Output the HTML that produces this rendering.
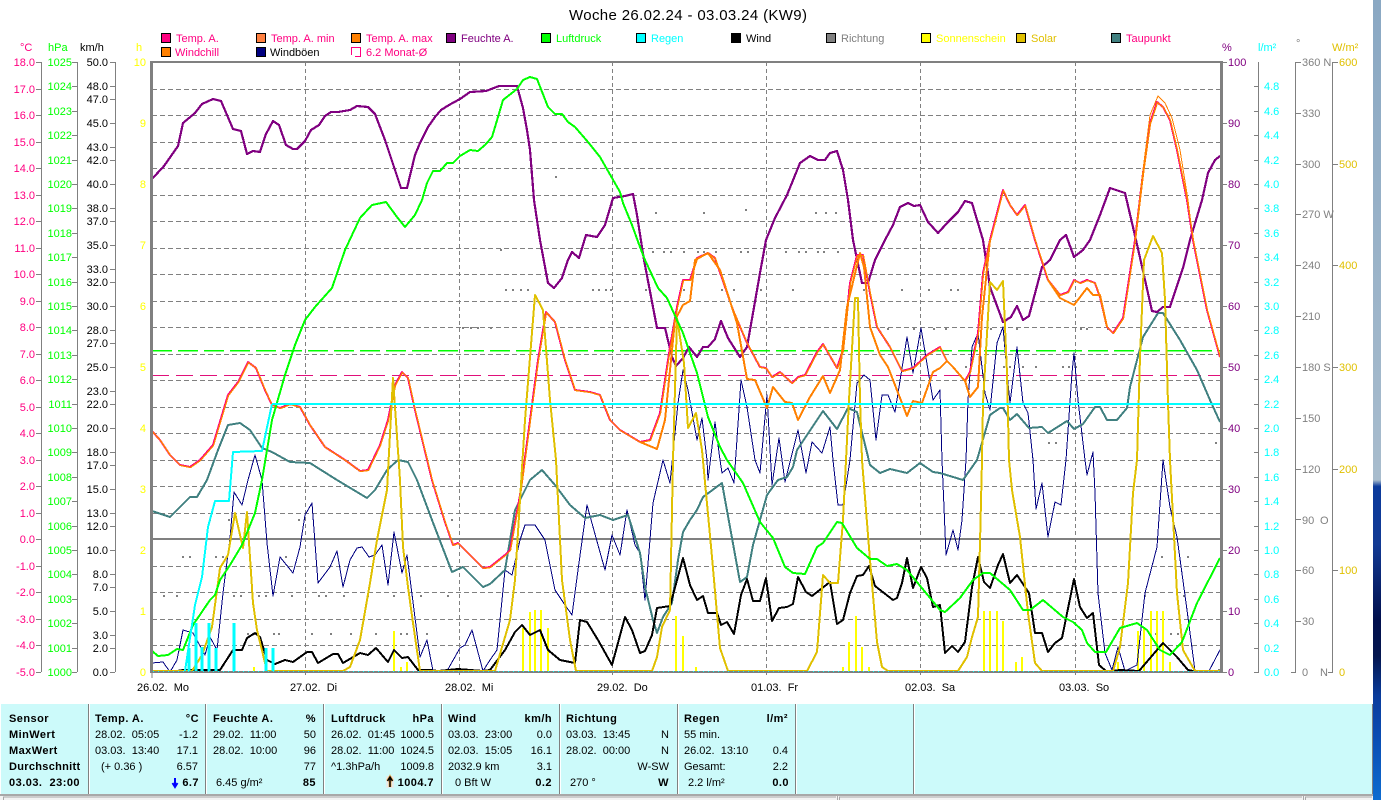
<!DOCTYPE html>
<html lang="de"><head><meta charset="utf-8"><title>Woche 26.02.24 - 03.03.24 (KW9)</title>
<style>
html,body{margin:0;padding:0;background:#fff;width:1381px;height:800px;overflow:hidden}
svg{position:absolute;left:0;top:0;display:block}
text{font-family:"Liberation Sans",sans-serif;font-size:11px;white-space:pre}
.l{shape-rendering:crispEdges;fill:none;stroke-linejoin:round}
.b{font-weight:bold;letter-spacing:.45px;fill:#000}
</style></head><body>
<svg width="1381" height="800" viewBox="0 0 1381 800" xmlns="http://www.w3.org/2000/svg">
<defs><linearGradient id="dsk" x1="0" y1="0" x2="0" y2="1">
<stop offset="0" stop-color="#8aa8c3"/><stop offset=".6" stop-color="#a8bccd"/><stop offset=".608" stop-color="#0b3a9c"/><stop offset=".68" stop-color="#123a94"/><stop offset=".775" stop-color="#01104e"/><stop offset=".82" stop-color="#04164f"/><stop offset=".87" stop-color="#0a3c9c"/><stop offset=".92" stop-color="#0a4cb2"/><stop offset="1" stop-color="#0d6cd0"/></linearGradient></defs>
<rect width="1381" height="800" fill="#fff"/>
<rect x="1373" y="0" width="8" height="800" fill="url(#dsk)"/>

<!-- title -->
<text x="569" y="20" textLength="238" style="font-size:15px" fill="#000">Woche 26.02.24 - 03.03.24 (KW9)</text>

<!-- legend -->
<g stroke="#000" stroke-width="1" shape-rendering="crispEdges">
<rect x="161.5" y="33.5" width="9" height="9" fill="#ff0080"/><rect x="256.5" y="33.5" width="9" height="9" fill="#ff8040"/><rect x="351.5" y="33.5" width="9" height="9" fill="#ff8000"/><rect x="446.5" y="33.5" width="9" height="9" fill="#800080"/><rect x="541.5" y="33.5" width="9" height="9" fill="#00ff00"/><rect x="636.5" y="33.5" width="9" height="9" fill="#00ffff"/><rect x="731.5" y="33.5" width="9" height="9" fill="#000"/><rect x="826.5" y="33.5" width="9" height="9" fill="#808080"/><rect x="921.5" y="33.5" width="9" height="9" fill="#ffff00"/><rect x="1016.5" y="33.5" width="9" height="9" fill="#e0c000"/><rect x="1111.5" y="33.5" width="9" height="9" fill="#408080"/>
<rect x="161.5" y="47.5" width="9" height="9" fill="#ff8000"/><rect x="256.5" y="47.5" width="9" height="9" fill="#000080"/>
</g>
<path d="M351.5 55V47.5H360.5V56.5H355" fill="none" stroke="#ff0080" shape-rendering="crispEdges"/>
<g>
<text x="176" y="42" fill="#ff0080">Temp. A.</text><text x="271" y="42" fill="#ff0080">Temp. A. min</text><text x="366" y="42" fill="#ff0080">Temp. A. max</text><text x="461" y="42" fill="#800080">Feuchte A.</text><text x="556" y="42" fill="#00ff00">Luftdruck</text><text x="651" y="42" fill="#00ffff">Regen</text><text x="746" y="42" fill="#000">Wind</text><text x="841" y="42" fill="#808080">Richtung</text><text x="936" y="42" fill="#ffff00">Sonnenschein</text><text x="1031" y="42" fill="#e0c000">Solar</text><text x="1126" y="42" fill="#ff0080">Taupunkt</text>
<text x="175" y="56" fill="#ff0080">Windchill</text><text x="270" y="56" fill="#000">Windböen</text><text x="366" y="56" fill="#ff0080">6.2 Monat-Ø</text>
</g>

<!-- unit labels -->
<text x="20" y="51" fill="#ff0080">°C</text><text x="48" y="51" fill="#00ff00">hPa</text><text x="80" y="51" fill="#000">km/h</text><text x="136" y="51" fill="#ffff00">h</text>
<text x="1222" y="51" fill="#800080">%</text><text x="1258" y="51" fill="#00ffff">l/m²</text><text x="1296" y="47" fill="#808080">°</text><text x="1332" y="51" fill="#e0c000">W/m²</text>

<!-- temp axis -->
<g fill="#ff0080" text-anchor="end">
<text x="35" y="66">18.0</text><text x="35" y="93">17.0</text><text x="35" y="119">16.0</text><text x="35" y="146">15.0</text><text x="35" y="172">14.0</text><text x="35" y="199">13.0</text><text x="35" y="225">12.0</text><text x="35" y="252">11.0</text><text x="35" y="278">10.0</text><text x="35" y="305">9.0</text><text x="35" y="331">8.0</text><text x="35" y="358">7.0</text><text x="35" y="384">6.0</text><text x="35" y="411">5.0</text><text x="35" y="437">4.0</text><text x="35" y="464">3.0</text><text x="35" y="490">2.0</text><text x="35" y="517">1.0</text><text x="35" y="543">0.0</text><text x="35" y="570">-1.0</text><text x="35" y="596">-2.0</text><text x="35" y="623">-3.0</text><text x="35" y="649">-4.0</text><text x="35" y="676">-5.0</text>
</g>
<!-- pressure axis -->
<g fill="#00ff00" text-anchor="end">
<text x="72" y="66">1025</text><text x="72" y="90">1024</text><text x="72" y="115">1023</text><text x="72" y="139">1022</text><text x="72" y="164">1021</text><text x="72" y="188">1020</text><text x="72" y="212">1019</text><text x="72" y="237">1018</text><text x="72" y="261">1017</text><text x="72" y="286">1016</text><text x="72" y="310">1015</text><text x="72" y="334">1014</text><text x="72" y="359">1013</text><text x="72" y="383">1012</text><text x="72" y="408">1011</text><text x="72" y="432">1010</text><text x="72" y="456">1009</text><text x="72" y="481">1008</text><text x="72" y="505">1007</text><text x="72" y="530">1006</text><text x="72" y="554">1005</text><text x="72" y="578">1004</text><text x="72" y="603">1003</text><text x="72" y="627">1002</text><text x="72" y="652">1001</text><text x="72" y="676">1000</text>
</g>
<!-- km/h axis -->
<g fill="#000" text-anchor="end">
<text x="108" y="66">50.0</text><text x="108" y="90">48.0</text><text x="108" y="103">47.0</text><text x="108" y="127">45.0</text><text x="108" y="151">43.0</text><text x="108" y="164">42.0</text><text x="108" y="188">40.0</text><text x="108" y="212">38.0</text><text x="108" y="225">37.0</text><text x="108" y="249">35.0</text><text x="108" y="273">33.0</text><text x="108" y="286">32.0</text><text x="108" y="310">30.0</text><text x="108" y="334">28.0</text><text x="108" y="347">27.0</text><text x="108" y="371">25.0</text><text x="108" y="395">23.0</text><text x="108" y="408">22.0</text><text x="108" y="432">20.0</text><text x="108" y="456">18.0</text><text x="108" y="469">17.0</text><text x="108" y="493">15.0</text><text x="108" y="517">13.0</text><text x="108" y="530">12.0</text><text x="108" y="554">10.0</text><text x="108" y="578">8.0</text><text x="108" y="591">7.0</text><text x="108" y="615">5.0</text><text x="108" y="639">3.0</text><text x="108" y="652">2.0</text><text x="108" y="676">0.0</text>
</g>
<!-- h axis -->
<g fill="#ffff00" text-anchor="end">
<text x="146" y="66">10</text><text x="146" y="127">9</text><text x="146" y="188">8</text><text x="146" y="249">7</text><text x="146" y="310">6</text><text x="146" y="371">5</text><text x="146" y="432">4</text><text x="146" y="493">3</text><text x="146" y="554">2</text><text x="146" y="615">1</text><text x="146" y="676">0</text>
</g>
<!-- % axis -->
<g fill="#800080">
<text x="1228" y="66">100</text><text x="1228" y="127">90</text><text x="1228" y="188">80</text><text x="1228" y="249">70</text><text x="1228" y="310">60</text><text x="1228" y="371">50</text><text x="1228" y="432">40</text><text x="1228" y="493">30</text><text x="1228" y="554">20</text><text x="1228" y="615">10</text><text x="1228" y="676">0</text>
</g>
<!-- l/m2 axis -->
<g fill="#00ffff">
<text x="1264" y="90">4.8</text><text x="1264" y="115">4.6</text><text x="1264" y="139">4.4</text><text x="1264" y="164">4.2</text><text x="1264" y="188">4.0</text><text x="1264" y="212">3.8</text><text x="1264" y="237">3.6</text><text x="1264" y="261">3.4</text><text x="1264" y="286">3.2</text><text x="1264" y="310">3.0</text><text x="1264" y="334">2.8</text><text x="1264" y="359">2.6</text><text x="1264" y="383">2.4</text><text x="1264" y="408">2.2</text><text x="1264" y="432">2.0</text><text x="1264" y="456">1.8</text><text x="1264" y="481">1.6</text><text x="1264" y="505">1.4</text><text x="1264" y="530">1.2</text><text x="1264" y="554">1.0</text><text x="1264" y="578">0.8</text><text x="1264" y="603">0.6</text><text x="1264" y="627">0.4</text><text x="1264" y="652">0.2</text><text x="1264" y="676">0.0</text>
</g>
<!-- direction axis -->
<g fill="#808080">
<text x="1302" y="66">360 N</text><text x="1302" y="117">330</text><text x="1302" y="168">300</text><text x="1302" y="218">270 W</text><text x="1302" y="269">240</text><text x="1302" y="320">210</text><text x="1302" y="371">180 S</text><text x="1302" y="422">150</text><text x="1302" y="473">120</text><text x="1302" y="524">90</text><text x="1320" y="524">O</text><text x="1302" y="574">60</text><text x="1302" y="625">30</text><text x="1302" y="676">0</text><text x="1320" y="676">N</text>
</g>
<!-- W/m2 axis -->
<g fill="#e0c000">
<text x="1339" y="66">600</text><text x="1339" y="168">500</text><text x="1339" y="269">400</text><text x="1339" y="371">300</text><text x="1339" y="473">200</text><text x="1339" y="574">100</text><text x="1339" y="676">0</text>
</g>

<!-- axis lines & ticks -->
<path shape-rendering="crispEdges" stroke="#808080" stroke-width="1" fill="none" d="M41.5 62V672M77.5 62V672M115.5 62V672M1258.5 62V672M1295.5 62V672M1332.5 62V672
M36 62.5h5M36 89.5h5M36 115.5h5M36 142.5h5M36 168.5h5M36 195.5h5M36 221.5h5M36 248.5h5M36 274.5h5M36 301.5h5M36 327.5h5M36 354.5h5M36 380.5h5M36 407.5h5M36 433.5h5M36 460.5h5M36 486.5h5M36 513.5h5M36 539.5h5M36 566.5h5M36 592.5h5M36 619.5h5M36 645.5h5M36 672.5h5
M72 62.5h5M72 86.5h5M72 111.5h5M72 135.5h5M72 160.5h5M72 184.5h5M72 208.5h5M72 233.5h5M72 257.5h5M72 282.5h5M72 306.5h5M72 330.5h5M72 355.5h5M72 379.5h5M72 404.5h5M72 428.5h5M72 452.5h5M72 477.5h5M72 501.5h5M72 526.5h5M72 550.5h5M72 574.5h5M72 599.5h5M72 623.5h5M72 648.5h5M72 672.5h5
M110 62.5h5M110 86.5h5M110 99.5h5M110 123.5h5M110 147.5h5M110 160.5h5M110 184.5h5M110 208.5h5M110 221.5h5M110 245.5h5M110 269.5h5M110 282.5h5M110 306.5h5M110 330.5h5M110 343.5h5M110 367.5h5M110 391.5h5M110 404.5h5M110 428.5h5M110 452.5h5M110 465.5h5M110 489.5h5M110 513.5h5M110 526.5h5M110 550.5h5M110 574.5h5M110 587.5h5M110 611.5h5M110 635.5h5M110 648.5h5M110 672.5h5
M1222 62.5h5M1222 123.5h5M1222 184.5h5M1222 245.5h5M1222 306.5h5M1222 367.5h5M1222 428.5h5M1222 489.5h5M1222 550.5h5M1222 611.5h5M1222 672.5h5
M1254 86.5h5M1254 111.5h5M1254 135.5h5M1254 160.5h5M1254 184.5h5M1254 208.5h5M1254 233.5h5M1254 257.5h5M1254 282.5h5M1254 306.5h5M1254 330.5h5M1254 355.5h5M1254 379.5h5M1254 404.5h5M1254 428.5h5M1254 452.5h5M1254 477.5h5M1254 501.5h5M1254 526.5h5M1254 550.5h5M1254 574.5h5M1254 599.5h5M1254 623.5h5M1254 648.5h5M1254 672.5h5
M1296 62.5h5M1296 113.5h5M1296 164.5h5M1296 214.5h5M1296 265.5h5M1296 316.5h5M1296 367.5h5M1296 418.5h5M1296 469.5h5M1296 519.5h5M1296 570.5h5M1296 621.5h5M1291 672.5h5
M1333 62.5h5M1333 164.5h5M1333 265.5h5M1333 367.5h5M1333 469.5h5M1333 570.5h5M1328 672.5h5"/>

<!-- grid -->
<path shape-rendering="crispEdges" stroke="#808080" stroke-width="1" stroke-dasharray="5 3" fill="none" d="M152 89.5H1220M152 115.5H1220M152 142.5H1220M152 168.5H1220M152 195.5H1220M152 221.5H1220M152 248.5H1220M152 274.5H1220M152 301.5H1220M152 327.5H1220M152 354.5H1220M152 380.5H1220M152 407.5H1220M152 433.5H1220M152 460.5H1220M152 486.5H1220M152 513.5H1220M152 566.5H1220M152 592.5H1220M152 619.5H1220M152 645.5H1220"/>
<path shape-rendering="crispEdges" stroke="#808080" stroke-width="1" stroke-dasharray="4 3" fill="none" d="M305.5 62V678M459.5 62V678M612.5 62V678M766.5 62V678M920.5 62V678M1075.5 62V678"/>
<path shape-rendering="crispEdges" stroke="#808080" fill="none" d="M152 678V672"/>

<!-- direction dots -->
<path shape-rendering="crispEdges" stroke="#808080" stroke-width="2" fill="none" d="M209 520h2M228 520h2M298 520h2M451 520h2M182 557h2M189 557h2M215 557h2M222 557h2M285 557h2M163 596h2M176 596h2M233 596h2M240 596h2M258 596h2M265 596h2M291 596h2M318 596h2M325 596h2M343 596h2M367 596h2M393 596h2M420 596h2M447 596h2M247 634h2M253 634h2M273 634h2M278 634h2M311 634h2M330 634h2M350 634h2M375 634h2M393 634h2M400 634h2M406 634h2M426 634h2M555 177h2M500 250h2M505 290h2M512 290h2M520 290h2M527 290h2M592 290h2M598 290h2M605 290h2M610 290h2M462 328h2M470 328h2M477 328h2M490 328h2M655 213h2M703 213h2M745 210h2M815 213h2M825 213h2M835 213h2M652 252h2M663 252h2M670 252h2M683 252h2M697 252h2M703 252h2M715 252h2M740 252h2M747 252h2M785 252h2M798 252h2M805 252h2M817 252h2M823 252h2M837 252h2M645 290h2M683 290h2M721 290h2M733 290h2M760 290h2M792 290h2M848 290h2M863 290h2M901 290h2M928 290h2M950 290h2M957 290h2M887 329h2M913 329h2M933 329h2M945 329h2M990 329h2M1016 329h2M1080 329h2M1086 329h2M1107 329h2M965 367h2M978 367h2M1003 367h2M1009 367h2M1022 367h2M1035 367h2M1062 367h2M1068 367h2M1075 367h2M1048 443h2M1055 443h2M1215 443h2M1161 557h2M1187 557h2M1144 596h2M1183 596h2M1155 634h2M1162 634h2M1170 634h2M1177 634h2"/>

<!-- average dashed -->
<path shape-rendering="crispEdges" fill="none" stroke="#00ff00" stroke-width="1.5" stroke-dasharray="20 6" d="M152 350.5H1220"/>
<path shape-rendering="crispEdges" fill="none" stroke="#e0107a" stroke-width="1" stroke-dasharray="17 7" d="M152 375.5H1220"/>

<!-- zero line -->
<rect x="152" y="538" width="1069" height="2" fill="#808080"/>

<!-- sunshine bars -->
<path shape-rendering="crispEdges" fill="none" stroke="#ffff00" stroke-width="2" d="M254 672V667M394 672V631M401 672V667M407 672V662M523 672V628M530 672V612M535 672V610M541 672V610M548 672V628M676 672V616M683 672V636M696 672V667M843 672V667M849 672V642M856 672V616M862 672V647M869 672V667M984 672V611M990 672V611M997 672V611M1003 672V621M1016 672V662M1022 672V657M1118 672V662M1138 672V631M1144 672V627M1151 672V611M1157 672V611M1163 672V611M1170 672V662"/>

<!-- gusts -->
<polyline class="l" stroke="#000080" stroke-width="1" points="152,663 163,662 170,672 177,660 183,630 193,633 205,655 210,637 217,650 223,593 230,538 234,492 242,505 248,480 255,455 262,480 267,543 273,596 280,557 293,573 300,547 305,515 312,503 318,583 330,567 337,551 343,587 350,560 357,548 362,547 369,557 375,555 382,545 388,585 394,532 402,573 407,555 420,657 427,640 433,671 447,671 460,648 465,645 472,630 483,671 490,660 497,650 505,570 512,575 520,540 525,525 535,525 545,540 555,590 565,605 572,615 578,570 587,505 598,545 605,570 612,535 620,555 627,510 635,545 640,553 645,600 653,503 663,460 670,483 678,403 683,370 688,390 697,440 702,418 707,460 708,480 715,422 720,460 722,473 728,468 734,483 741,380 747,407 755,460 760,473 767,395 772,485 779,438 785,482 798,430 806,473 812,442 822,453 830,427 833,460 838,505 843,505 850,460 857,383 864,375 870,380 876,440 882,395 888,395 895,412 907,337 913,373 921,328 933,400 940,390 942,460 946,555 953,530 958,550 962,520 966,460 968,400 972,347 978,333 985,393 990,410 997,343 1003,327 1007,373 1010,403 1017,347 1023,403 1028,413 1033,460 1036,509 1042,483 1048,537 1055,502 1061,505 1066,460 1072,373 1074,353 1078,400 1085,460 1087,475 1093,452 1095,493 1098,593 1105,653 1112,670 1118,647 1125,671 1137,665 1145,593 1157,547 1163,460 1170,507 1177,537 1187,610 1195,671 1209,671 1221,648"/>
<!-- dew point -->
<polyline class="l" stroke="#408080" stroke-width="2" points="152,511 170,517 190,497 197,497 207,480 218,450 228,425 240,423 250,430 262,448 272,452 290,462 310,463 337,480 367,498 375,490 387,470 398,460 408,462 417,480 432,520 452,572 463,567 483,587 490,584 505,570 515,510 530,480 542,470 555,485 570,505 585,518 600,515 613,520 628,515 640,553 645,587 653,620 657,633 663,617 672,603 678,560 683,532 690,520 697,510 703,497 722,483 740,582 747,577 753,545 767,495 778,480 787,477 793,467 797,450 823,411 837,429 848,408 857,412 870,465 880,473 890,469 907,473 920,463 933,472 940,473 963,480 977,460 990,415 1000,408 1003,408 1010,420 1017,414 1029,428 1042,427 1048,433 1067,421 1074,429 1083,424 1095,407 1100,407 1107,420 1117,420 1127,408 1130,387 1143,337 1158,313 1163,313 1180,340 1197,370 1210,400 1220,422"/>
<!-- humidity -->
<polyline class="l" stroke="#800080" stroke-width="2.2" points="151,180 164,166 178,146 183,123 195,113 202,104 213,99 221,101 233,129 241,131 247,154 253,151 260,152 266,134 273,121 279,125 286,145 293,149 297,149 305,141 311,130 319,125 325,116 331,112 338,112 350,110 357,106 368,107 375,114 385,140 395,170 401,188 407,188 415,155 420,143 428,127 435,117 441,110 449,105 460,99 470,92 486,91 499,86 517,86 523,108 527,130 530,150 534,200 540,240 548,283 554,288 562,278 568,260 572,252 579,258 586,235 597,237 605,225 613,198 625,196 633,194 637,215 644,260 657,328 665,328 672,357 676,366 683,358 689,347 697,357 703,347 708,347 715,339 721,321 728,338 740,357 747,347 753,313 760,273 766,240 775,218 787,195 800,163 810,156 818,160 825,160 830,153 837,151 843,170 848,200 853,240 862,283 868,283 875,260 885,240 893,225 900,207 908,203 914,206 920,205 928,222 938,233 948,222 958,212 965,201 972,203 983,240 990,287 1003,322 1011,317 1017,306 1023,320 1029,316 1042,267 1050,260 1060,240 1066,235 1074,257 1083,250 1090,240 1100,215 1110,188 1125,193 1136,240 1152,311 1157,312 1163,307 1170,307 1183,268 1190,240 1202,200 1208,173 1215,160 1220,156"/>
<!-- temp pink -->
<polyline class="l" stroke="#ff0080" stroke-width="2" points="151,430 160,440 170,455 180,465 190,467 200,460 213,445 228,395 238,382 248,362 256,368 265,390 272,405 280,408 290,404 300,407 310,425 325,447 345,460 360,471 368,470 380,445 388,420 395,385 402,372 408,378 415,410 432,480 445,522 453,545 458,543 483,568 490,567 505,555 510,550 520,495 530,420 538,360 546,312 555,322 565,360 575,390 590,392 600,395 610,420 620,430 640,442 650,440 660,413 670,347 677,307 683,280 690,280 697,258 708,253 715,258 733,310 747,343 760,367 766,368 772,377 780,372 792,383 798,377 805,375 817,352 823,344 837,368 843,350 850,283 857,255 863,255 870,293 877,327 890,347 902,371 913,368 927,355 940,347 947,361 953,367 965,381 970,372 978,333 983,273 990,240 1003,190 1010,205 1017,215 1025,205 1035,240 1048,280 1060,295 1068,292 1074,280 1080,283 1087,280 1095,283 1100,297 1107,327 1113,333 1123,318 1135,240 1143,173 1150,123 1157,102 1163,107 1170,120 1177,150 1187,200 1193,240 1207,310 1220,357"/>
<!-- temp max (orange thin) -->
<polyline class="l" stroke="#ff8000" stroke-width="1" points="1135,240 1143,170 1150,115 1158,96 1165,103 1172,118 1180,150 1188,200 1193,240"/>
<!-- temp / windchill orange -->
<polyline class="l" stroke="#ff8000" stroke-width="1.3" transform="translate(.5 .5)" points="151,430 160,440 170,455 180,465 190,467 200,460 213,445 228,395 238,382 248,362 256,368 265,390 272,405 280,408 290,404 300,407 310,425 325,447 345,460 360,471 368,470 380,445 388,420 395,385 402,372 408,378 415,410 432,480 445,522 453,545 458,543 483,568 490,567 505,555 510,550 520,495 530,420 538,360 546,312 555,322 565,360 575,390 590,392 600,395 610,420 620,430 640,442 650,440 660,413 670,347 677,307 683,280 690,280 697,258 708,253 715,258 733,310 747,343 760,367 766,368 772,377 780,372 792,383 798,377 805,375 817,352 823,344 837,368 843,350 850,283 857,255 863,255 870,293 877,327 890,347 902,371 913,368 927,355 940,347 947,361 953,367 965,381 970,372 978,333 983,273 990,240 1003,190 1010,205 1017,215 1025,205 1035,240 1048,280 1060,295 1068,292 1074,280 1080,283 1087,280 1095,283 1100,297 1107,327 1113,333 1123,318 1135,240 1143,173 1150,123 1157,102 1163,107 1170,120 1177,150 1187,200 1193,240 1207,310 1220,357"/>
<polyline class="l" stroke="#ff8000" stroke-width="2" points="640,442 657,449 665,420 675,320 683,305 690,301 695,260 708,253 720,270 737,323 747,379 755,380 767,408 773,387 785,402 792,403 798,420 810,397 823,376 830,393 840,370 847,307 860,253 864,267 870,327 880,355 888,367 907,416 913,401 922,403 933,372 940,368 947,361 953,367 965,381 970,397 978,387 982,317 990,240"/>
<polyline class="l" stroke="#ff8000" stroke-width="2" points="1048,280 1060,298 1074,305 1087,288 1093,295 1100,295 1107,327"/>
<!-- wind -->
<polyline class="l" stroke="#000" stroke-width="2" points="177,671 183,670 220,670 233,650 242,650 247,638 255,633 260,637 267,660 275,664 285,660 293,662 307,652 312,652 318,663 333,654 338,654 343,663 360,653 368,655 376,648 388,662 394,650 402,658 408,657 418,670 430,670 438,671 458,669 483,671 490,670 505,650 515,632 522,625 530,635 540,630 548,650 560,660 575,663 580,620 587,622 598,640 612,665 625,617 632,630 640,653 645,651 652,635 657,608 670,606 683,558 690,585 697,600 703,596 708,613 717,613 721,625 727,622 734,634 741,595 747,579 753,601 760,601 766,578 772,621 779,608 787,607 793,604 798,577 806,592 812,596 830,582 837,624 843,620 850,593 857,576 863,575 869,566 875,586 893,600 897,598 902,583 907,558 913,588 921,567 927,578 933,607 940,605 945,653 952,646 958,652 965,642 972,587 978,557 984,582 990,588 998,565 1003,554 1010,583 1017,575 1029,593 1035,633 1042,633 1048,652 1055,643 1062,638 1074,579 1080,607 1087,618 1093,613 1099,665 1106,671 1113,671 1120,670 1139,671 1163,643 1177,657 1188,670 1193,671 1217,671 1221,670"/>
<!-- solar -->
<polyline class="l" stroke="#e0c000" stroke-width="2" points="151,671 192,671 202,655 212,627 220,568 228,555 235,513 243,548 247,512 253,603 257,630 267,671 343,671 350,667 360,640 370,583 377,540 387,490 393,378 400,480 403,547 408,587 413,623 420,671 495,671 510,620 515,580 525,420 535,295 543,310 550,400 556,460 562,580 570,640 576,671 652,671 657,657 662,627 670,610 673,460 677,318 684,363 688,428 696,413 702,450 712,557 720,648 728,671 807,671 817,652 823,575 830,583 838,583 843,520 849,400 855,298 858,298 860,400 862,460 870,560 877,642 882,667 888,671 958,671 967,657 972,637 978,617 980,543 982,460 983,403 990,282 997,290 1003,281 1007,373 1009,460 1012,490 1020,537 1028,613 1035,663 1042,671 1113,671 1120,647 1128,583 1133,493 1137,460 1140,357 1144,260 1153,236 1162,253 1165,300 1168,403 1170,460 1177,593 1183,650 1195,671 1221,671"/>
<!-- pressure -->
<polyline class="l" stroke="#00ff00" stroke-width="2" points="152,651 158,656 168,655 177,649 183,650 193,625 210,600 215,595 220,580 230,565 242,545 255,513 262,480 272,420 285,375 295,345 305,320 315,307 332,288 345,250 360,218 372,205 386,202 397,217 405,227 415,215 422,200 427,183 433,171 440,171 447,163 453,163 460,156 470,150 478,151 485,145 492,137 498,117 503,100 517,89 523,80 530,77 537,79 548,107 555,114 562,114 568,122 575,127 588,142 600,157 612,178 620,192 623,203 632,225 640,247 645,260 658,288 667,298 677,320 683,333 690,353 697,373 703,397 708,417 720,447 727,460 743,483 760,522 773,538 785,567 793,573 805,574 817,547 823,543 837,522 842,523 857,548 863,553 870,559 877,559 887,566 897,564 907,570 940,610 945,612 960,598 973,580 983,573 990,573 1010,590 1023,610 1030,610 1043,600 1063,617 1073,622 1082,630 1087,643 1095,652 1106,652 1120,628 1137,623 1147,630 1160,650 1170,655 1182,642 1197,603 1220,558"/>
<!-- rain -->
<path shape-rendering="crispEdges" fill="none" stroke="#00ffff" stroke-width="3" d="M189 672V648M196 672V623M202 672V647M209 672V623M216 672V648M234 672V623M266 672V648M273 672V648"/>
<polyline class="l" stroke="#00ffff" stroke-width="2" points="185,671 195,605 202,577 208,527 215,501 229,501 233,452 262,451 272,404"/>
<rect x="272" y="403" width="949" height="2" fill="#00ffff"/>

<!-- frame -->
<rect x="150" y="61" width="1073" height="2" fill="#808080"/>
<rect x="150" y="61" width="3" height="612" fill="#808080"/>
<rect x="1220" y="61" width="3" height="612" fill="#808080"/>
<rect x="150" y="671" width="1073" height="2" fill="#808080"/>
<path stroke="#00ffff" stroke-dasharray="1 4" d="M153 671.5H1220" shape-rendering="crispEdges"/>

<!-- day labels -->
<g fill="#000"><text x="137" y="691">26.02.  Mo</text><text x="290" y="691">27.02.  Di</text><text x="445" y="691">28.02.  Mi</text><text x="597" y="691">29.02.  Do</text><text x="751" y="691">01.03.  Fr</text><text x="905" y="691">02.03.  Sa</text><text x="1059" y="691">03.03.  So</text></g>

<!-- panel -->
<rect x="1" y="704" width="1372" height="91" fill="#ccfafa"/>
<rect x="1372" y="704" width="1" height="92" fill="#808080"/>
<path shape-rendering="crispEdges" fill="none" stroke="#808080" d="M88.5 704V795M205.5 704V795M323.5 704V795M441.5 704V795M559.5 704V795M677.5 704V795M795.5 704V795M913.5 704V795"/>
<path shape-rendering="crispEdges" fill="none" stroke="#fff" d="M89.5 704V795M206.5 704V795M324.5 704V795M442.5 704V795M560.5 704V795M678.5 704V795M796.5 704V795M914.5 704V795"/>
<rect x="0" y="794" width="1373" height="6" fill="#f2f2f2"/>
<rect x="0" y="794" width="1373" height="2" fill="#a8a8a8"/>
<path shape-rendering="crispEdges" fill="none" stroke="#a8a8a8" d="M3.5 800V797H836M837.5 794V800M839.5 800V797H1302M1303.5 794V800M1305.5 800V797H1372"/>

<!-- col 1 -->
<text class="b" x="9" y="722">Sensor</text><text class="b" x="9" y="738">MinWert</text><text class="b" x="9" y="754">MaxWert</text><text class="b" x="9" y="770" style="letter-spacing:.3px">Durchschnitt</text><text class="b" x="9" y="786" textLength="71">03.03.  23:00</text>
<!-- col 2 -->
<text class="b" x="95" y="722">Temp. A.</text><text class="b" x="199" y="722" text-anchor="end">°C</text>
<text x="95" y="738">28.02.  05:05</text><text x="198" y="738" text-anchor="end">-1.2</text>
<text x="95" y="754">03.03.  13:40</text><text x="198" y="754" text-anchor="end">17.1</text>
<text x="101" y="770">(+ 0.36 )</text><text x="198" y="770" text-anchor="end">6.57</text>
<path d="M175 778V786M172.5 783L175 787L177.5 783" stroke="#0000ff" stroke-width="2" fill="none"/><text class="b" x="199" y="786" text-anchor="end">6.7</text>
<!-- col 3 -->
<text class="b" x="213" y="722">Feuchte A.</text><text class="b" x="316" y="722" text-anchor="end">%</text>
<text x="213" y="738">29.02.  11:00</text><text x="316" y="738" text-anchor="end">50</text>
<text x="213" y="754">28.02.  10:00</text><text x="316" y="754" text-anchor="end">96</text>
<text x="316" y="770" text-anchor="end">77</text>
<text x="216" y="786">6.45 g/m²</text><text class="b" x="316" y="786" text-anchor="end">85</text>
<!-- col 4 -->
<text class="b" x="331" y="722">Luftdruck</text><text class="b" x="434" y="722" text-anchor="end">hPa</text>
<text x="331" y="738">26.02.  01:45</text><text x="434" y="738" text-anchor="end">1000.5</text>
<text x="331" y="754">28.02.  11:00</text><text x="434" y="754" text-anchor="end">1024.5</text>
<text x="331" y="770">^1.3hPa/h</text><text x="434" y="770" text-anchor="end">1009.8</text>
<rect x="386" y="776" width="8" height="12" fill="#e4ecec"/><path d="M390 787V778M387.5 781L390 777L392.5 781" stroke="#ff9000" stroke-width="3" fill="none" opacity=".6"/><path d="M390 787V778M387.5 781L390 777L392.5 781" stroke="#000" stroke-width="1.5" fill="none"/><text class="b" x="434" y="786" text-anchor="end">1004.7</text>
<!-- col 5 -->
<text class="b" x="448" y="722">Wind</text><text class="b" x="552" y="722" text-anchor="end">km/h</text>
<text x="448" y="738">03.03.  23:00</text><text x="552" y="738" text-anchor="end">0.0</text>
<text x="448" y="754">02.03.  15:05</text><text x="552" y="754" text-anchor="end">16.1</text>
<text x="448" y="770">2032.9 km</text><text x="552" y="770" text-anchor="end">3.1</text>
<text x="455" y="786">0 Bft W</text><text class="b" x="552" y="786" text-anchor="end">0.2</text>
<!-- col 6 -->
<text class="b" x="566" y="722">Richtung</text>
<text x="566" y="738">03.03.  13:45</text><text x="669" y="738" text-anchor="end">N</text>
<text x="566" y="754">28.02.  00:00</text><text x="669" y="754" text-anchor="end">N</text>
<text x="669" y="770" text-anchor="end">W-SW</text>
<text x="570" y="786">270 °</text><text class="b" x="669" y="786" text-anchor="end">W</text>
<!-- col 7 -->
<text class="b" x="684" y="722">Regen</text><text class="b" x="788" y="722" text-anchor="end">l/m²</text>
<text x="684" y="738">55 min.</text>
<text x="684" y="754">26.02.  13:10</text><text x="788" y="754" text-anchor="end">0.4</text>
<text x="684" y="770">Gesamt:</text><text x="788" y="770" text-anchor="end">2.2</text>
<text x="688" y="786">2.2 l/m²</text><text class="b" x="789" y="786" text-anchor="end">0.0</text>
</svg>
</body></html>
